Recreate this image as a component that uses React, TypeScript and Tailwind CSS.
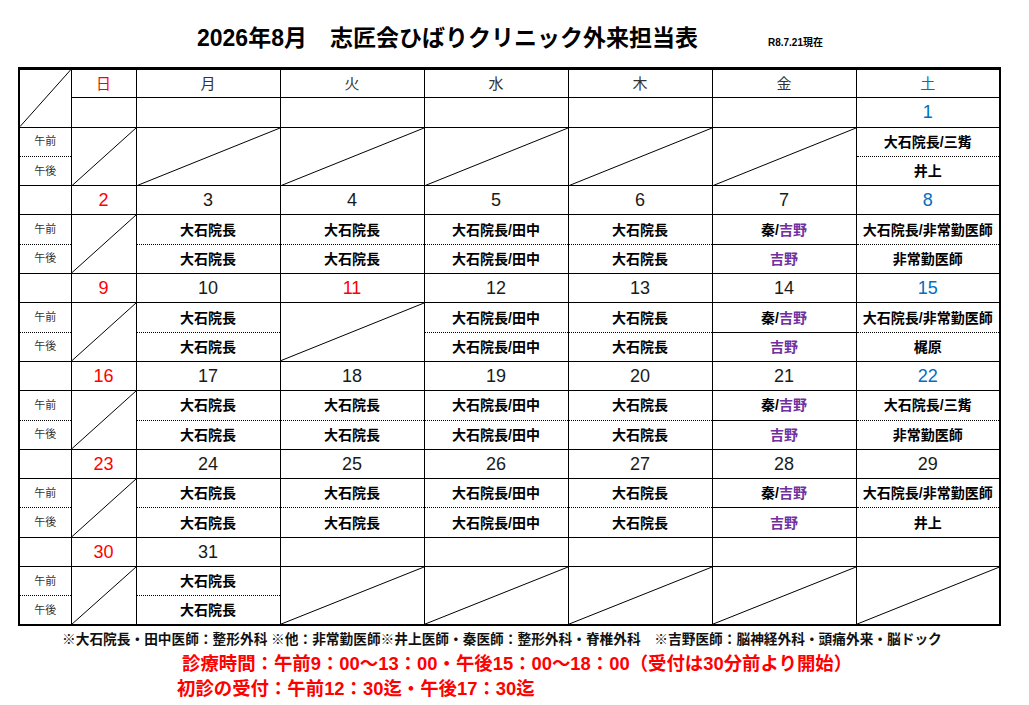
import type { ReactNode } from 'react';

type Slot = [string, string] | null;

interface Week {
  dates: string[];
  slots: Slot[];
}

const DAYS = ['日', '月', '火', '水', '木', '金', '土'];

const weeks: Week[] = [
  {
    dates: ['', '', '', '', '', '', '1'],
    slots: [null, null, null, null, null, null, ['大石院長/三觜', '井上']],
  },
  {
    dates: ['2', '3', '4', '5', '6', '7', '8'],
    slots: [
      null,
      ['大石院長', '大石院長'],
      ['大石院長', '大石院長'],
      ['大石院長/田中', '大石院長/田中'],
      ['大石院長', '大石院長'],
      ['秦/吉野', '吉野'],
      ['大石院長/非常勤医師', '非常勤医師'],
    ],
  },
  {
    dates: ['9', '10', '11', '12', '13', '14', '15'],
    slots: [
      null,
      ['大石院長', '大石院長'],
      null,
      ['大石院長/田中', '大石院長/田中'],
      ['大石院長', '大石院長'],
      ['秦/吉野', '吉野'],
      ['大石院長/非常勤医師', '梶原'],
    ],
  },
  {
    dates: ['16', '17', '18', '19', '20', '21', '22'],
    slots: [
      null,
      ['大石院長', '大石院長'],
      ['大石院長', '大石院長'],
      ['大石院長/田中', '大石院長/田中'],
      ['大石院長', '大石院長'],
      ['秦/吉野', '吉野'],
      ['大石院長/三觜', '非常勤医師'],
    ],
  },
  {
    dates: ['23', '24', '25', '26', '27', '28', '29'],
    slots: [
      null,
      ['大石院長', '大石院長'],
      ['大石院長', '大石院長'],
      ['大石院長/田中', '大石院長/田中'],
      ['大石院長', '大石院長'],
      ['秦/吉野', '吉野'],
      ['大石院長/非常勤医師', '井上'],
    ],
  },
  {
    dates: ['30', '31', '', '', '', '', ''],
    slots: [null, ['大石院長', '大石院長'], null, null, null, null, null],
  },
];

function dayColor(i: number) {
  if (i === 0) return 'text-[#ff0000]';
  if (i === 6) return 'text-[#0070c0]';
  return 'text-[#333]';
}

function dateColor(i: number, d: string) {
  if (i === 0 || d === '11') return 'text-[#ff0000]';
  if (i === 6 && d !== '29') return 'text-[#0070c0]';
  return 'text-[#1a1a1a]';
}

// 吉野 is printed in purple
function renderName(name: string): ReactNode {
  if (!name.includes('吉野')) return name;
  const parts = name.split('吉野');
  return (
    <>
      {parts[0]}
      <span className="text-[#7030a0]">吉野</span>
      {parts[1]}
    </>
  );
}

function Diagonal() {
  return (
    <svg
      className="pointer-events-none absolute inset-0 h-full w-full"
      viewBox="0 0 100 100"
      preserveAspectRatio="none"
    >
      <line x1="0" y1="100" x2="100" y2="0" stroke="black" strokeWidth="1" vectorEffect="non-scaling-stroke" />
    </svg>
  );
}

const cell = 'border border-black p-0 text-center align-middle';
const row = 'h-[29.3px]';

export default function App() {
  return (
    <div className="relative h-[705px] w-[1029px] overflow-hidden bg-white font-['Liberation_Sans','Noto_Sans_CJK_JP',sans-serif] text-black">
      <div className="flex items-baseline pl-[197px] pt-[27px]">
        <h1 className="text-[23px] font-bold leading-none">2026年8月　志匠会ひばりクリニック外来担当表</h1>
        <span className="ml-[70px] text-[10px] font-bold leading-none">R8.7.21現在</span>
      </div>

      <table className="ml-[18px] mt-[17px] w-[983px] table-fixed border-collapse border-2 border-t-[3px] border-black">
        <colgroup>
          <col className="w-[52px]" />
          <col className="w-[65px]" />
          <col />
          <col />
          <col />
          <col />
          <col />
          <col />
        </colgroup>
        <tbody>
          <tr className={row}>
            <td rowSpan={2} className={`${cell} relative`}>
              <Diagonal />
            </td>
            {DAYS.map((d, i) => (
              <td key={d} className={`${cell} text-[15px] leading-none ${dayColor(i)}`}>
                {d}
              </td>
            ))}
          </tr>
          {weeks.map((w, wi) => (
            <WeekRows key={wi} week={w} first={wi === 0} />
          ))}
        </tbody>
      </table>

      <div className="pl-[62px] pt-[5px] text-[13.7px] font-bold leading-[18px] text-[#111]">
        ※大石院長・田中医師：整形外科 ※他：非常勤医師※井上医師・秦医師：整形外科・脊椎外科　※吉野医師：脳神経外科・頭痛外来・脳ドック
      </div>
      <div className="pl-[182px] pt-[4px] text-[18.4px] font-bold leading-[22px] text-[#ff0000]">
        診療時間：午前9：00～13：00・午後15：00～18：00（受付は30分前より開始）
      </div>
      <div className="pl-[177px] pt-[3px] text-[18.4px] font-bold leading-[22px] text-[#ff0000]">
        初診の受付：午前12：30迄・午後17：30迄
      </div>
    </div>
  );
}

function WeekRows({ week, first }: { week: Week; first: boolean }) {
  return (
    <>
      <tr className={row}>
        {!first && <td className={cell} />}
        {week.dates.map((d, i) => (
          <td key={i} className={`${cell} text-[18px] leading-none ${dateColor(i, d)}`}>
            {d}
          </td>
        ))}
      </tr>
      <tr className={row}>
        <td className={`${cell} text-[11px] leading-none text-[#333] [border-bottom-style:dotted]`}>午前</td>
        {week.slots.map((s, i) =>
          s === null ? (
            <td key={i} rowSpan={2} className={`${cell} relative`}>
              <Diagonal />
            </td>
          ) : (
            <td
              key={i}
              className={`${cell} text-[14px] font-bold leading-none ${i === 5 ? '' : '[border-bottom-style:dotted]'}`}
            >
              {renderName(s[0])}
            </td>
          ),
        )}
      </tr>
      <tr className={row}>
        <td className={`${cell} text-[11px] leading-none text-[#333] [border-top-style:dotted]`}>午後</td>
        {week.slots.map((s, i) =>
          s === null ? null : (
            <td
              key={i}
              className={`${cell} text-[14px] font-bold leading-none ${i === 5 ? '' : '[border-top-style:dotted]'}`}
            >
              {renderName(s[1])}
            </td>
          ),
        )}
      </tr>
    </>
  );
}
